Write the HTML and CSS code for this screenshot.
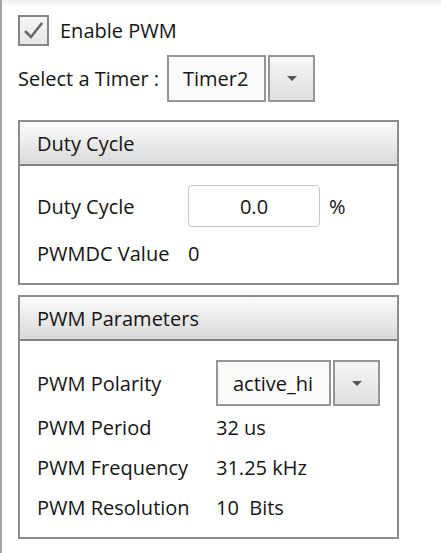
FILE: index.html
```html
<!DOCTYPE html>
<html lang="en">
<head>
    <meta charset="UTF-8">
    <meta name="viewport" content="width=device-width, initial-scale=1.0">
    <title>PWM Settings</title>
    <link rel="stylesheet" href="styles.css">
</head>
<body>
    <div class="panel">
        <!-- Enable checkbox -->
        <label class="enable">
            <span class="check">
                <svg width="21" height="19" viewBox="0 0 21 19">
                    <path d="M2 10 L8 16 L19 2" fill="none" stroke="#6a6a6a" stroke-width="2.6"/>
                </svg>
            </span>
            <span>Enable PWM</span>
        </label>

        <!-- Timer selection -->
        <div class="timer-row">
            <span class="timer-label">Select a Timer :</span>
            <div class="combo timer-combo">
                <div class="combo-text">Timer2</div>
                <div class="combo-btn"><span class="arrow"></span></div>
            </div>
        </div>

        <!-- Duty cycle group -->
        <div class="group duty">
            <div class="group-head">Duty Cycle</div>
            <div class="group-body">
                <div class="row row-input">
                    <span class="label">Duty Cycle</span>
                    <div class="num-input">0.0</div>
                    <span class="unit">%</span>
                </div>
                <div class="row">
                    <span class="label">PWMDC Value</span>
                    <span>0</span>
                </div>
            </div>
        </div>

        <!-- PWM parameters group -->
        <div class="group params">
            <div class="group-head">PWM Parameters</div>
            <div class="group-body">
                <div class="row row-input">
                    <span class="label wide">PWM Polarity</span>
                    <div class="combo polarity-combo">
                        <div class="combo-text">active_hi</div>
                        <div class="combo-btn"><span class="arrow"></span></div>
                    </div>
                </div>
                <div class="row">
                    <span class="label wide">PWM Period</span>
                    <span>32 us</span>
                </div>
                <div class="row">
                    <span class="label wide">PWM Frequency</span>
                    <span>31.25 kHz</span>
                </div>
                <div class="row">
                    <span class="label wide">PWM Resolution</span>
                    <span>10&nbsp; Bits</span>
                </div>
            </div>
        </div>
    </div>
</body>
</html>
```

FILE: styles.css
```css
body {
    margin: 0;
    background-color: #fff;
    font-family: "Open Sans", "Noto Sans", sans-serif;
    font-size: 20px;
    color: #151515;
}
.panel {
    min-height: 553px;
    box-sizing: border-box;
    border-left: 2px solid #a3a3a3;
    background: linear-gradient(#eeeeee, #ffffff 7px);
    padding: 15px 0 0 16px;
}
.enable {
    display: flex;
    align-items: center;
    gap: 11px;
    height: 31px;
}
.check {
    width: 31px;
    height: 31px;
    box-sizing: border-box;
    border: 2px solid #858585;
    background: linear-gradient(#f6f6f6, #e6e6e6);
    display: flex;
    align-items: center;
    justify-content: center;
}
.timer-row {
    display: flex;
    align-items: center;
    margin-top: 9px;
}
.timer-label {
    width: 149px;
    white-space: nowrap;
}
.combo {
    display: flex;
    gap: 2px;
    height: 47px;
}
.combo-text {
    box-sizing: border-box;
    border: 2px solid #959595;
    background-color: #fafafa;
    display: flex;
    align-items: center;
}
.combo-btn {
    box-sizing: border-box;
    width: 47px;
    border: 2px solid #959595;
    background: linear-gradient(#f7f7f7, #dedede);
    display: flex;
    align-items: center;
    justify-content: center;
}
.arrow {
    width: 0;
    height: 0;
    border-left: 5px solid transparent;
    border-right: 5px solid transparent;
    border-top: 5px solid #555;
}
.timer-combo .combo-text {
    width: 99px;
    padding-left: 14px;
}
.group {
    width: 381px;
    box-sizing: border-box;
    border: 2px solid #8c8c8c;
}
.duty {
    margin-top: 18px;
    height: 165px;
}
.params {
    margin-top: 10px;
    height: 244px;
}
.group-head {
    height: 44px;
    box-sizing: border-box;
    border-bottom: 2px solid #828282;
    background: linear-gradient(#fbfbfb, #d9d9d9);
    padding-left: 17px;
    display: flex;
    align-items: center;
}
.group-body {
    padding: 19px 0 0 17px;
}
.row {
    display: flex;
    align-items: center;
    height: 38px;
}
.row-input {
    height: 42px;
    margin-bottom: 7px;
}
.label {
    width: 151px;
    white-space: nowrap;
}
.label.wide {
    width: 179px;
}
.num-input {
    width: 132px;
    height: 42px;
    box-sizing: border-box;
    border: 1px solid #c8c8c8;
    border-radius: 4px;
    background-color: #fff;
    display: flex;
    align-items: center;
    justify-content: center;
}
.unit {
    margin-left: 9px;
}
.params .row-input {
    height: 46px;
    margin-bottom: 5px;
}
.params .row {
    margin-bottom: 2px;
}
.polarity-combo {
    height: 46px;
}
.polarity-combo .combo-text {
    width: 115px;
    padding-left: 15px;
}
```
